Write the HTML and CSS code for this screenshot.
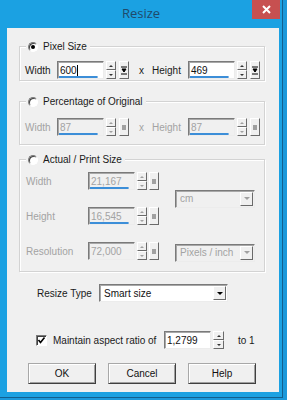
FILE: index.html
```html
<!DOCTYPE html>
<html lang="en">
<head>
  <meta charset="UTF-8" />
  <meta name="viewport" content="width=device-width, initial-scale=1.0"/>
  <title>Resize</title>
  <link rel="stylesheet" href="styles.css">
</head>
<body>
  <div class="window">
    <div class="titlebar">
      <span></span>
      <span class="title">Resize</span>
      <span class="close">
        <svg width="9" height="9" viewBox="0 0 9 9"><path d="M1 1L8 8M8 1L1 8" stroke="#fff" stroke-width="2"/></svg>
      </span>
    </div>

    <div class="client">
      <!-- pixel size -->
      <div class="group g1">
        <div class="legend"><span class="radio checked"></span>Pixel Size</div>
        <div class="row">
          <span class="lbl lbl-w">Width</span>
          <span class="edit ul">600<span class="caret"></span></span>
          <span class="spin"><i class="up"></i><i class="down"></i></span>
          <span class="extra">
            <svg width="6" height="9" viewBox="0 0 6 9"><path d="M0 1H6M1 3H5L3 6Z M0 8H6" stroke="#000" stroke-width="1" fill="#000"/></svg>
          </span>
          <span class="lbl lbl-x">x</span>
          <span class="lbl lbl-h">Height</span>
          <span class="edit ul">469</span>
          <span class="spin"><i class="up"></i><i class="down"></i></span>
          <span class="extra">
            <svg width="6" height="9" viewBox="0 0 6 9"><path d="M0 1H6M1 3H5L3 6Z M0 8H6" stroke="#000" stroke-width="1" fill="#000"/></svg>
          </span>
        </div>
      </div>

      <!-- percentage -->
      <div class="group g2">
        <div class="legend"><span class="radio"></span>Percentage of Original</div>
        <div class="row off">
          <span class="lbl lbl-w">Width</span>
          <span class="edit ul">87</span>
          <span class="spin"><i class="up"></i><i class="down"></i></span>
          <span class="extra"><b></b></span>
          <span class="lbl lbl-x">x</span>
          <span class="lbl lbl-h">Height</span>
          <span class="edit ul">87</span>
          <span class="spin"><i class="up"></i><i class="down"></i></span>
          <span class="extra"><b></b></span>
        </div>
      </div>

      <!-- actual / print -->
      <div class="group g3">
        <div class="legend"><span class="radio"></span>Actual / Print Size</div>
        <div class="print off">
          <span class="lbl">Width</span>
          <span class="edit ul">21,167</span>
          <span class="spin"><i class="up"></i><i class="down"></i></span>
          <span class="extra"><b></b></span>
          <span class="combo unit"><span class="val">cm</span><span class="btn"></span></span>

          <span class="lbl">Height</span>
          <span class="edit ul">16,545</span>
          <span class="spin"><i class="up"></i><i class="down"></i></span>
          <span class="extra"><b></b></span>

          <span class="lbl">Resolution</span>
          <span class="edit">72,000</span>
          <span class="spin"><i class="up"></i><i class="down"></i></span>
          <span class="extra"><b></b></span>
          <span class="combo"><span class="val">Pixels / inch</span><span class="btn"></span></span>
        </div>
      </div>

      <div class="row type-row">
        <span class="lbl lbl-type">Resize Type</span>
        <span class="combo wide"><span class="val">Smart size</span><span class="btn"></span></span>
      </div>

      <div class="row aspect-row">
        <span class="check">
          <svg width="9" height="9" viewBox="0 0 9 9"><path d="M1.5 4L3.5 6.5L7.5 1.5" stroke="#000" stroke-width="1.6" fill="none"/></svg>
        </span>
        <span class="lbl lbl-aspect">Maintain aspect ratio of</span>
        <span class="edit">1,2799</span>
        <span class="spin"><i class="up"></i><i class="down"></i></span>
        <span class="lbl lbl-to">to 1</span>
      </div>

      <div class="buttons">
        <button>OK</button>
        <button>Cancel</button>
        <button>Help</button>
      </div>
    </div>
  </div>
</body>
</html>
```

FILE: styles.css
```css
body {
  margin: 0;
  background: #1b98da;
  font-family: 'Liberation Sans', Arial, sans-serif;
  font-size: 10px;
  color: #1a1a1a;
}

.window {
  width: 283px;
  height: 398px;
  box-sizing: border-box;
  background: #1ba1e2;
  border-right: 1px solid #125f8e;
  border-bottom: 1px solid #125f8e;
}

.titlebar {
  height: 28px;
  display: grid;
  grid-template-columns: 1fr auto 1fr;
}

.title {
  font-family: 'Open Sans', sans-serif;
  font-size: 13px;
  line-height: 26px;
  color: #1f4a6b;
}

.close {
  justify-self: end;
  width: 28px;
  height: 19px;
  margin-right: 2px;
  background: #c75050;
  display: flex;
  align-items: center;
  justify-content: center;
}

.client {
  margin-left: 7px;
  width: 272px;
  height: 364px;
  box-sizing: border-box;
  background: #f0f0f0;
  padding: 0 14px 0 12px;
  display: flex;
  flex-direction: column;
}

/* group boxes */
.group {
  border: 1px solid #d3d3d3;
  box-shadow: inset 1px 1px #fff, 1px 1px #fff;
}

.g1 { margin-top: 18px; padding-bottom: 1px; }
.g2 { margin-top: 20px; padding-bottom: 8px; }
.g3 { margin-top: 14px; padding-bottom: 11px; }

.legend {
  display: flex;
  align-items: center;
  gap: 5px;
  width: max-content;
  height: 13px;
  margin: -7px 0 0 6px;
  padding: 0 3px 0 2px;
  background: #f0f0f0;
}

.radio {
  width: 10px;
  height: 10px;
  box-sizing: border-box;
  border-radius: 50%;
  border: 1px solid;
  border-color: #7a7a7a #fff #fff #7a7a7a;
  box-shadow: inset 1px 1px #404040;
  background: #fff;
  display: flex;
  align-items: center;
  justify-content: center;
}

.radio.checked::after {
  content: "";
  width: 4px;
  height: 4px;
  border-radius: 50%;
  background: #000;
}

.row {
  display: flex;
  align-items: center;
}

.g1 .row { margin-top: 8px; padding-left: 5px; }
.g2 .row { margin-top: 10px; padding-left: 5px; }

.lbl { white-space: nowrap; }
.lbl-w { width: 32px; }
.lbl-x { width: 5px; margin: 0 8px 0 10px; }
.lbl-h { width: 36px; }

.off .lbl,
.off .edit,
.off .combo { color: #a3a3a3; }

/* edit boxes */
.edit {
  width: 47px;
  height: 18px;
  box-sizing: border-box;
  padding: 2px 0 0 2px;
  border: 1px solid;
  border-color: #7a7a7a #ececec #ececec #7a7a7a;
  box-shadow: inset 1px 1px #a8a8a8;
  background: #fff;
  color: #111;
  line-height: 13px;
}

.off .edit { background: #f0f0f0; }

.edit.ul {
  background-image: linear-gradient(#3c8ed8, #3c8ed8);
  background-repeat: no-repeat;
  background-size: 88% 2px;
  background-position: 0 100%;
}

.caret {
  display: inline-block;
  width: 1px;
  height: 11px;
  background: #000;
  vertical-align: -2px;
}

.spin {
  width: 10px;
  height: 18px;
  margin-left: 2px;
  display: flex;
  flex-direction: column;
}

.spin i {
  flex: 1;
  border: 1px solid;
  border-color: #fff #6a6a6a #6a6a6a #fff;
  background: #f0f0f0;
  display: flex;
  align-items: center;
  justify-content: center;
}

.spin .up::before,
.spin .down::before {
  content: "";
  border-left: 2px solid transparent;
  border-right: 2px solid transparent;
}

.spin .up::before { border-bottom: 2px solid #333; }
.spin .down::before { border-top: 2px solid #333; }

.off .spin .up::before { border-bottom-color: #a0a0a0; }
.off .spin .down::before { border-top-color: #a0a0a0; }

.extra {
  width: 8px;
  height: 16px;
  margin-left: 3px;
  border: 1px solid;
  border-color: #fff #6a6a6a #6a6a6a #fff;
  display: flex;
  align-items: center;
  justify-content: center;
}

.extra b {
  width: 4px;
  height: 5px;
  background: #a0a0a0;
}

/* actual / print size */
.print {
  display: grid;
  grid-template-columns: 62px 49px 12px 9px 80px;
  grid-template-rows: 18px 18px 18px;
  row-gap: 17px;
  align-items: center;
  margin-top: 6px;
  padding-left: 6px;
}

.print .spin { margin-left: 0; }
.print .extra { margin-left: 0; }

.print .combo {
  grid-column: 5;
  margin-left: 17px;
}

.print .unit { grid-row: 1 / 3; }
.print .combo:last-child { grid-row: 3; margin-top: 3px; }

/* combo boxes */
.combo {
  width: 80px;
  height: 18px;
  box-sizing: border-box;
  border: 1px solid;
  border-color: #7a7a7a #ececec #ececec #7a7a7a;
  box-shadow: inset 1px 1px #a8a8a8;
  display: flex;
  align-items: center;
}

.combo .val {
  flex: 1;
  padding-left: 4px;
  white-space: nowrap;
}

.combo .btn {
  width: 13px;
  height: 14px;
  margin-right: 1px;
  box-sizing: border-box;
  border: 1px solid;
  border-color: #fff #6a6a6a #6a6a6a #fff;
  background: #f0f0f0;
  display: flex;
  align-items: center;
  justify-content: center;
}

.combo .btn::before {
  content: "";
  border-left: 3px solid transparent;
  border-right: 3px solid transparent;
  border-top: 3px solid #a0a0a0;
}

.combo.wide {
  width: 129px;
  background: #fff;
  color: #111;
}

.combo.wide .btn::before { border-top-color: #000; }

.type-row {
  margin: 12px 0 0 18px;
}

.lbl-type { width: 62px; }

.aspect-row {
  margin: 29px 0 0 17px;
}

.check {
  width: 11px;
  height: 11px;
  box-sizing: border-box;
  border: 1px solid;
  border-color: #7a7a7a #fff #fff #7a7a7a;
  box-shadow: inset 1px 1px #404040;
  background: #fff;
  display: flex;
  align-items: center;
  justify-content: center;
}

.lbl-aspect {
  width: 111px;
  margin-left: 6px;
}

.aspect-row .spin { width: 11px; }

.lbl-to { margin-left: 14px; }

.buttons {
  display: flex;
  gap: 12px;
  margin: 14px 0 0 9px;
}

button {
  width: 68px;
  height: 21px;
  padding: 0;
  font-family: 'Liberation Sans', Arial, sans-serif;
  font-size: 10px;
  color: #111;
  background: #f0f0f0;
  border: 1px solid;
  border-color: #a8a8a8 #404040 #404040 #a8a8a8;
  box-shadow: inset 1px 1px #fff, inset -1px -1px #a0a0a0;
}
```
